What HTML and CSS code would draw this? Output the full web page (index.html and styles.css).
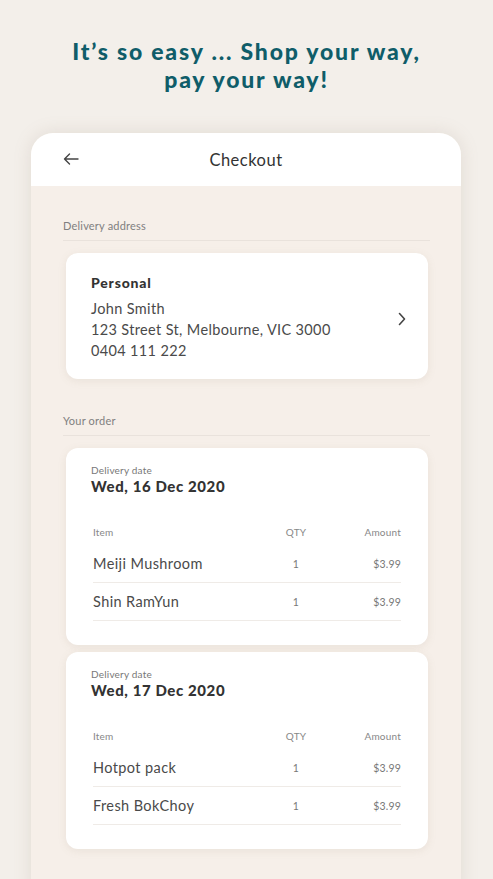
FILE: index.html
```html
<!DOCTYPE html>
<html lang="en">
  <head>
    <meta charset="UTF-8" />
    <meta name="viewport" content="width=device-width, initial-scale=1.0" />
    <title>Checkout</title>
    <link rel="stylesheet" href="styles.css">
  </head>
  <body>
    <div class="wrapper">
      <h1 class="headline">It’s so easy ... Shop your way,<br>pay your way!</h1>
      <div class="phone">
        <div class="topbar">
          <svg class="back" width="16" height="12" viewBox="0 0 16 12">
            <path d="M15 6H1.5M6.5 1L1.5 6l5 5" fill="none" stroke="#444" stroke-width="1.4" stroke-linecap="round" stroke-linejoin="round"/>
          </svg>
          <div class="title">Checkout</div>
        </div>
        <div class="content">
          <div class="label">Delivery address</div>
          <div class="card address">
            <div class="addrtext">
              <div class="name">Personal</div>
              <div>John Smith</div>
              <div>123 Street St, Melbourne, VIC 3000</div>
              <div>0404 111 222</div>
            </div>
            <svg class="chev" width="8" height="14" viewBox="0 0 8 14">
              <path d="M1.5 1.5L6.5 7l-5 5.5" fill="none" stroke="#444" stroke-width="1.6" stroke-linecap="round" stroke-linejoin="round"/>
            </svg>
          </div>

          <div class="label second">Your order</div>

          <div class="card order">
            <div class="small">Delivery date</div>
            <div class="date">Wed, 16 Dec 2020</div>
            <div class="table">
              <div class="row head"><span>Item</span><span class="qty">QTY</span><span class="amt">Amount</span></div>
              <div class="row item"><span>Meiji Mushroom</span><span class="qty">1</span><span class="amt">$3.99</span></div>
              <div class="row item"><span>Shin RamYun</span><span class="qty">1</span><span class="amt">$3.99</span></div>
            </div>
          </div>

          <div class="card order">
            <div class="small">Delivery date</div>
            <div class="date">Wed, 17 Dec 2020</div>
            <div class="table">
              <div class="row head"><span>Item</span><span class="qty">QTY</span><span class="amt">Amount</span></div>
              <div class="row item"><span>Hotpot pack</span><span class="qty">1</span><span class="amt">$3.99</span></div>
              <div class="row item"><span>Fresh BokChoy</span><span class="qty">1</span><span class="amt">$3.99</span></div>
            </div>
          </div>
        </div>
      </div>
    </div>
  </body>
</html>
```

FILE: styles.css
```css
* {
  margin: 0px;
  padding: 0px;
  box-sizing: border-box;
}
body {
  background-color: #f3efea;
  font-family: "Lato", "Liberation Sans", sans-serif;
  color: #444;
  overflow: hidden;
}
.wrapper {
  width: 493px;
  height: 879px;
  overflow: hidden;
}
.headline {
  color: #0f5d69;
  text-align: center;
  font-size: 23px;
  font-weight: 900;
  line-height: 28px;
  letter-spacing: 1.8px;
  padding-top: 37px;
}
.phone {
  margin: 40px 32px 0 31px;
  background-color: #f6efe9;
  border-radius: 22px 22px 0 0;
  box-shadow: 0 0 18px rgba(150, 130, 110, 0.18);
  height: 760px;
  overflow: hidden;
}
.topbar {
  background-color: #fff;
  height: 53px;
  display: flex;
  align-items: center;
  position: relative;
}
.back {
  position: absolute;
  left: 32px;
  top: 20px;
}
.title {
  flex: 1;
  text-align: center;
  font-size: 16.5px;
  color: #333;
  letter-spacing: 0.5px;
}
.content {
  padding: 33px 31px 0 32px;
}
.label {
  font-size: 11px;
  color: #808080;
  letter-spacing: 0.2px;
  padding-bottom: 8px;
  border-bottom: 1px solid #e9e2dc;
  margin-bottom: 12px;
}
.label.second {
  margin-top: 35px;
}
.card {
  background-color: #fff;
  border-radius: 12px;
  margin: 0 2px 0 3px;
  box-shadow: 0 2px 8px rgba(150, 130, 110, 0.12);
}
.address {
  display: flex;
  align-items: center;
  padding: 19px 22px 18px 25px;
}
.addrtext {
  flex: 1;
  font-size: 14.5px;
  line-height: 21px;
  letter-spacing: 0.35px;
  color: #4a4a4a;
}
.name {
  font-weight: 900;
  font-size: 14px;
  color: #333;
  letter-spacing: 0.8px;
  margin-bottom: 5px;
}
.chev {
  margin-top: 4px;
}
.order {
  padding: 16px 27px 24px 25px;
  margin-bottom: 7px;
}
.small {
  font-size: 10px;
  color: #777;
  letter-spacing: 0.2px;
}
.date {
  font-weight: 900;
  font-size: 15px;
  color: #333;
  letter-spacing: 0.6px;
  margin-top: 1px;
}
.table {
  margin-top: 31px;
  padding-left: 2px;
}
.row {
  display: grid;
  grid-template-columns: 1fr 60px 75px;
  align-items: center;
}
.row .qty {
  text-align: center;
}
.row .amt {
  text-align: right;
}
.head {
  font-size: 10px;
  color: #888;
  letter-spacing: 0.2px;
  padding-bottom: 7px;
}
.item {
  font-size: 14.5px;
  color: #4a4a4a;
  letter-spacing: 0.4px;
  height: 38px;
  border-bottom: 1px solid #efebe7;
}
.item .qty,
.item .amt {
  font-size: 10.5px;
  color: #777;
  letter-spacing: 0.2px;
}
```
